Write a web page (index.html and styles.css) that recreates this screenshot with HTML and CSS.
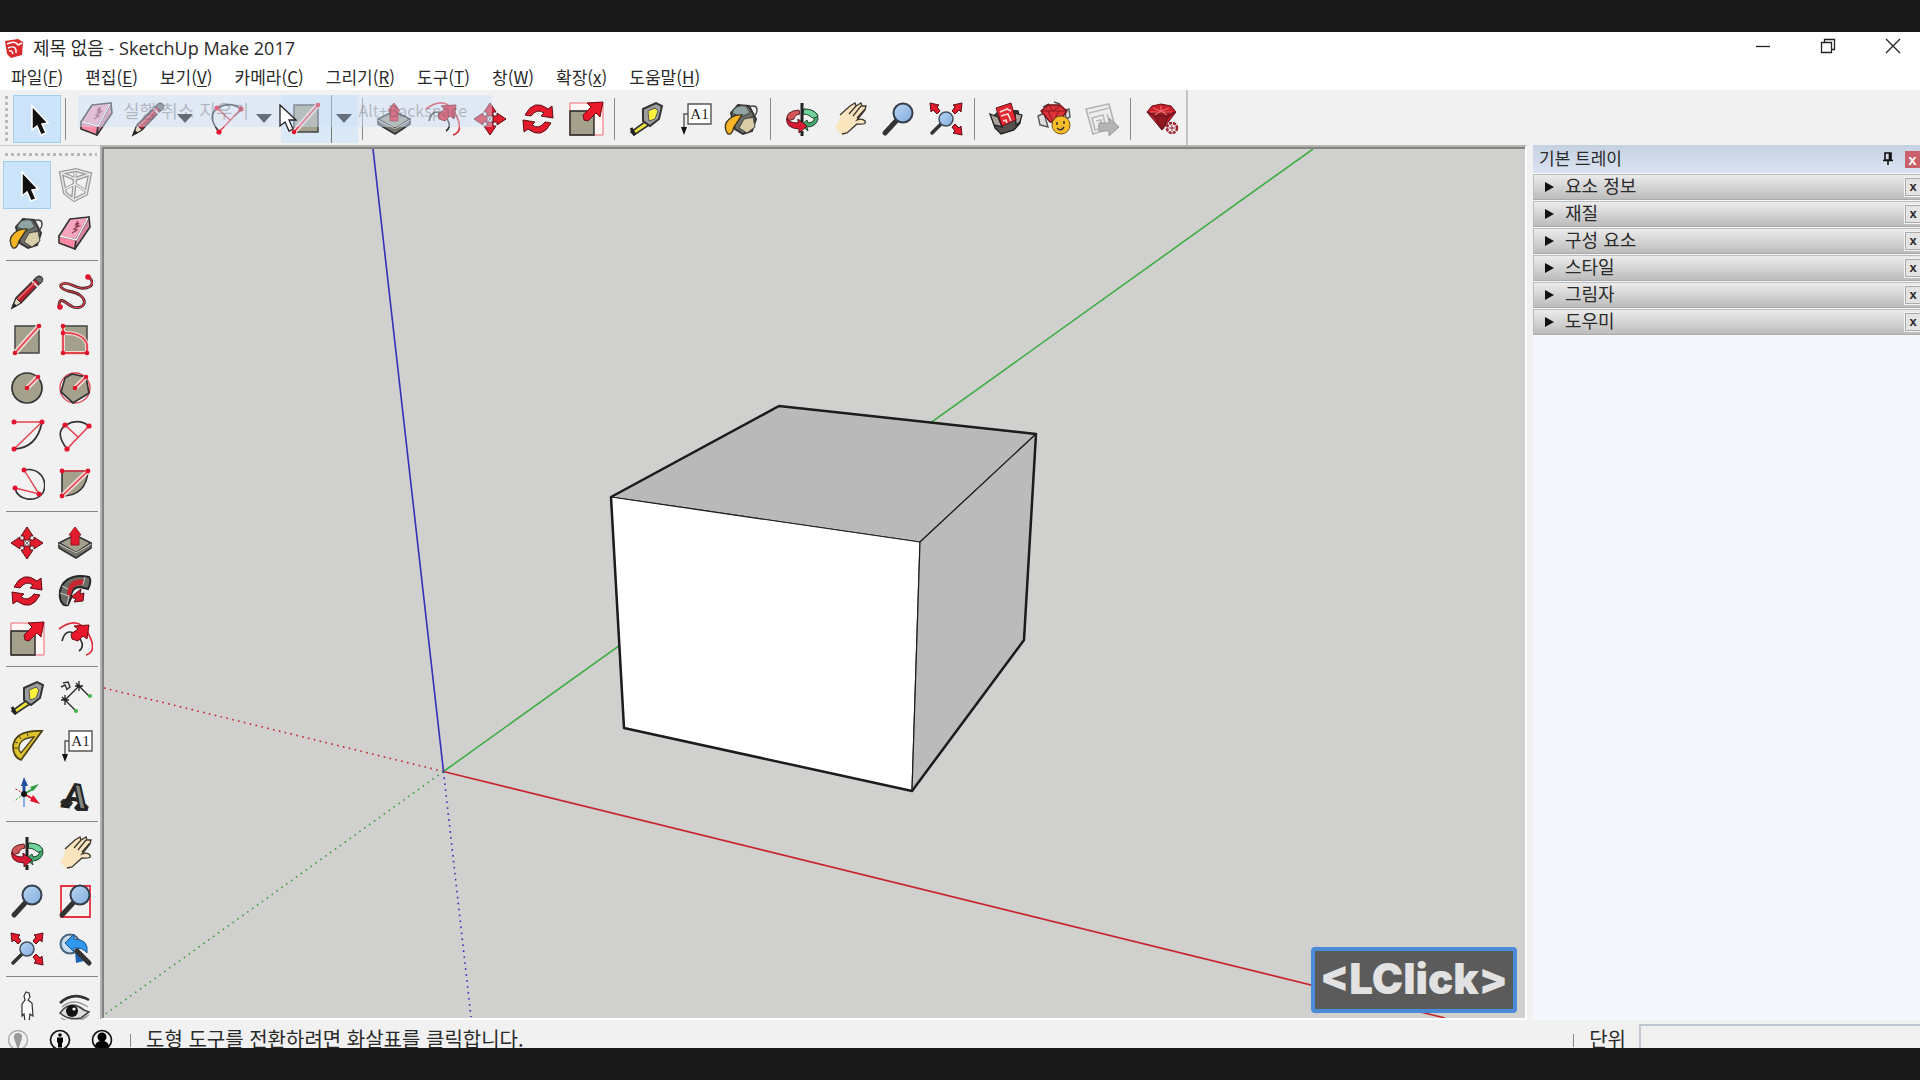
FILE: index.html
```html
<!DOCTYPE html>
<html lang="ko">
<head>
  <meta charset="UTF-8" />
  <meta name="viewport" content="width=device-width, initial-scale=1.0"/>
  <title>제목 없음 - SketchUp Make 2017</title>
  <link rel="stylesheet" href="styles.css">
</head>
<body>

  <svg class="sprite" aria-hidden="true">
    <defs>
      <linearGradient id="lens" x1="0" y1="0" x2="1" y2="1">
        <stop offset="0" stop-color="#b9d6f5"/><stop offset="1" stop-color="#83acdc"/>
      </linearGradient>
    </defs>

    <symbol id="i-select" viewBox="0 0 36 36">
      <path d="M13 5v24l5-4 4 9 5-2-4-9 6-1z" fill="#111" stroke="#fff" stroke-width="1.5"/>
    </symbol>
    <symbol id="i-component" viewBox="0 0 36 36">
      <g fill="none" stroke="#9a9a9a" stroke-width="4"><path d="M4 6l15-3 14 4-4 20-12 6-9-7zM4 6l14 6 15-5M18 12l-2 20"/><path d="M8 22l10-5 11 7M18 5v12" stroke-width="3"/></g>
      <g fill="none" stroke="#e8e8e8" stroke-width="1.5"><path d="M4 6l15-3 14 4-4 20-12 6-9-7zM4 6l14 6 15-5M18 12l-2 20M8 22l10-5 11 7M18 5v12"/></g>
    </symbol>
    <symbol id="i-eraser" viewBox="0 0 36 36">
      <g stroke="#333" stroke-width="1.6" stroke-linejoin="round"><path d="M13 4l19-2-13 23-17-4z" fill="#f5a5bd"/><path d="M2 21l17 4-1 9-16-6z" fill="#ff88a5"/><path d="M32 2l1 10-15 22 1-9z" fill="#d8869f"/></g>
      <path d="M3 21l16 4 12-22" fill="none" stroke="#fff" stroke-width="1.4"/><path d="M21 6l-2 3 3-1-3 3 3 0-5 3 3 1-5 3" fill="none" stroke="#8c3b55" stroke-width="1.3"/>
    </symbol>
    <symbol id="i-pencil" viewBox="0 0 36 36">
      <path d="M3 34l4-10L27 4q3-3 5-1t0 5L12 29z" fill="#bd1e2d" stroke="#333" stroke-width="1.5"/>
      <path d="M3 34l4-10 5 5z" fill="#e5d5bd" stroke="#333"/><path d="M3 34l2-5 3 3z" fill="#222"/><path d="M26 5l5 5 2-2q2-4-1-5t-4 0z" fill="#6c6c6c" stroke="#333"/><path d="M23 7l6 6" stroke="#ddd" stroke-width="2"/><path d="M9 25L26 8" stroke="#f06b72" stroke-width="1.5"/>
    </symbol>
    <symbol id="i-freehand" viewBox="0 0 36 36">
      <path d="M32 3c9 9-3 15-17 8-12-5-16 3-4 6 24 4 18 20 5 16-7-3-14-13-14 0" fill="none" stroke="#3c2023" stroke-width="2.8"/><path d="M32 3c9 9-3 15-17 8-12-5-16 3-4 6 24 4 18 20 5 16-7-3-14-13-14 0" fill="none" stroke="#e4444e" stroke-width="1.2"/>
      <g fill="#e2142d"><circle cx="31" cy="3" r="2.8"/><circle cx="3" cy="33" r="2.8"/></g>
    </symbol>
    <symbol id="i-rect" viewBox="0 0 36 36">
      <path d="M6 4h24v27H6z" fill="#a3a18c" stroke="#444" stroke-width="1.5"/><path d="M6 31L30 4" stroke="#f3d9d6" stroke-width="5"/><path d="M6 31L30 4" stroke="#e4404c" stroke-width="1.8"/>
      <g fill="#e2142d"><circle cx="30" cy="4" r="2.3"/><circle cx="6" cy="31" r="2.3"/></g>
    </symbol>
    <symbol id="i-rotrect" viewBox="0 0 36 36">
      <path d="M6 4h24v27H6z" fill="#a3a18c" stroke="#444" stroke-width="1.5"/><path d="M6 4v27h24v-9Q25 10 6 11" fill="none" stroke="#f3d9d6" stroke-width="4"/><path d="M6 4v27h24v-9Q25 10 6 11" fill="none" stroke="#e4404c" stroke-width="1.8"/>
      <g fill="#e2142d"><circle cx="6" cy="4" r="2.3"/><circle cx="6" cy="11" r="2.3"/><circle cx="6" cy="31" r="2.3"/><circle cx="30" cy="31" r="2.3"/></g>
    </symbol>
    <symbol id="i-circle" viewBox="0 0 36 36">
      <circle cx="18" cy="18" r="15" fill="#a3a18c" stroke="#333" stroke-width="1.7"/><path d="M18 18L29 7" stroke="#f3d9d6" stroke-width="5"/><path d="M18 18L29 7" stroke="#e4404c" stroke-width="1.6"/>
      <g fill="#e2142d"><circle cx="18" cy="18" r="2.3"/><circle cx="29" cy="7" r="2.3"/></g>
    </symbol>
    <symbol id="i-polygon" viewBox="0 0 36 36">
      <circle cx="18" cy="18" r="15" fill="none" stroke="#e4404c" stroke-width="1.3"/><path d="M15 4l14 3 3 16-16 10L4 22l4-14z" fill="#a3a18c" stroke="#333" stroke-width="1.7"/><path d="M18 18L29 7" stroke="#f3d9d6" stroke-width="5"/><path d="M18 18L29 7" stroke="#e4404c" stroke-width="1.6"/>
      <g fill="#e2142d"><circle cx="18" cy="18" r="2.3"/><circle cx="29" cy="7" r="2.3"/></g>
    </symbol>
    <symbol id="i-arc" viewBox="0 0 36 36">
      <path d="M33 4Q28 30 5 31" fill="none" stroke="#333" stroke-width="1.7"/><path d="M5 4h28L5 31" fill="none" stroke="#e4404c" stroke-width="1.4"/>
      <g fill="#e2142d"><circle cx="5" cy="4" r="2.5"/><circle cx="33" cy="4" r="2.5"/><circle cx="5" cy="31" r="2.5"/></g>
    </symbol>
    <symbol id="i-arc2" viewBox="0 0 36 36">
      <path d="M10 31Q-3 14 9 7T32 8" fill="none" stroke="#333" stroke-width="1.7"/><path d="M10 31L32 8M8 7l13 12" fill="none" stroke="#e4404c" stroke-width="1.6"/>
      <g fill="#e2142d"><circle cx="8" cy="7" r="2.6"/><circle cx="32" cy="8" r="2.6"/><circle cx="10" cy="31" r="2.6"/></g>
    </symbol>
    <symbol id="i-arc3" viewBox="0 0 36 36">
      <path d="M15 4C40-1 44 36 18 33Q8 31 6 22" fill="none" stroke="#333" stroke-width="1.7"/><path d="M15 4l15 24-24-6" fill="none" stroke="#e4404c" stroke-width="1.4"/>
      <g fill="#e2142d"><circle cx="15" cy="4" r="2.5"/><circle cx="30" cy="28" r="2.5"/><circle cx="6" cy="22" r="2.5"/></g>
    </symbol>
    <symbol id="i-pie" viewBox="0 0 36 36">
      <path d="M5 5v25Q29 30 31 5z" fill="#a3a18c" stroke="#333" stroke-width="1.6"/><path d="M5 30L31 5" stroke="#f3d9d6" stroke-width="5"/><path d="M5 30L31 5H5" fill="none" stroke="#e4404c" stroke-width="1.6"/>
      <g fill="#e2142d"><circle cx="5" cy="5" r="2.4"/><circle cx="31" cy="5" r="2.4"/><circle cx="5" cy="30" r="2.4"/></g>
    </symbol>
    <symbol id="i-move" viewBox="0 0 36 36">
      <g fill="#e31b2d" stroke="#5a1015" stroke-width="1"><path id="mv" d="M18 2l6 9h-3v4h-6v-4h-3z"/><use href="#mv" transform="rotate(90 18 18)"/><use href="#mv" transform="rotate(180 18 18)"/><use href="#mv" transform="rotate(270 18 18)"/></g>
      <path d="M15 15l6 6M21 15l-6 6" stroke="#777" stroke-width="1"/>
    </symbol>
    <symbol id="i-push" viewBox="0 0 36 36">
      <g stroke="#333" stroke-width="1.6" stroke-linejoin="round"><path d="M2 18l16-8 16 8-15 10z" fill="#a3a18c"/><path d="M2 18v5l17 10 15-10v-5L19 28z" fill="#77776c"/></g>
      <path d="M2 19l17 9 15-9" fill="none" stroke="#ddd"/><path d="M18 2l6 8h-2v10h-8V10h-2z" fill="#e31b2d" stroke="#9a1420"/>
    </symbol>
    <symbol id="i-rotate" viewBox="0 0 36 36">
      <g fill="#e31b2d" stroke="#5a1015"><path id="rt" d="M5 14Q14-3 28 8l4-3 1 12-12-2 3-3Q17 7 11 15z"/><use href="#rt" transform="rotate(180 18 18)"/></g>
    </symbol>
    <symbol id="i-follow" viewBox="0 0 36 36">
      <path d="M3 25C1 8 15 0 32 4q3 4-1 12l-8-2Q14 14 14 25l-3 7Q5 34 3 25z" fill="#6b6c64" stroke="#252525" stroke-width="2"/><path d="M10 23C10 9 18 5 27 7l-1 5c-8-1-11 3-12 10z" fill="#c92632"/><path d="M14 24l10-8-1 5 4-1-1 8-9 1 2-3z" fill="#d81c2b" stroke="#55161b"/><path d="M3 20l9 3-2 9M5 13l6 3M28 4l-2 8" fill="none" stroke="#ccc"/>
    </symbol>
    <symbol id="i-scale" viewBox="0 0 36 36">
      <path d="M2 2h33v32H2z" fill="#fff6f6" stroke="#ef6872"/><path d="M2 10h24v24H2z" fill="#a3a18c" stroke="#222" stroke-width="1.4"/><path d="M35 1l-3 15-4-4-8 8-4-1-1-5 8-8-4-4z" fill="#e8172a" stroke="#6b1016"/>
    </symbol>
    <symbol id="i-offset" viewBox="0 0 36 36">
      <path d="M2 8Q21-6 31 12t-2 22" fill="none" stroke="#e02c39" stroke-width="1.7"/><path d="M5 20Q9 5 21 15q8 10 1 15" fill="none" stroke="#333" stroke-width="1.7"/><path d="M32 4l-2 14-4-3-5 5-6-2-1-5 7-5-4-3z" fill="#e8172a" stroke="#6b1016"/>
    </symbol>
    <symbol id="i-tape" viewBox="0 0 36 36">
      <path d="M3 31l15-11 3 4L6 34z" fill="#ece43a" stroke="#333" stroke-width="1.6"/><path d="M3 27l4 7" stroke="#222" stroke-width="3"/><path d="M15 8l13-6 6 3-3 13-9 7-7-5z" fill="#9d9da0" stroke="#333" stroke-width="2"/><path d="M20 10l7-3 3 3-3 8-6 2z" fill="#fff23c" stroke="#555"/>
    </symbol>
    <symbol id="i-dim" viewBox="0 0 36 36">
      <path d="M8 20L22 6M8 20l10 10M22 6l10 10M4 20h8M8 15v10M5 17l6 6M18 6h8M22 1v10M19 3l6 6" fill="none" stroke="#222" stroke-width="1.3"/><g fill="#43b44b"><circle cx="19" cy="31" r="2"/><circle cx="33" cy="16" r="2"/></g><path d="M6 3l5-1 2 5-4 3M4 7l4-2 2 4" fill="none" stroke="#333" stroke-width="1.5"/>
    </symbol>
    <symbol id="i-protractor" viewBox="0 0 36 36">
      <path d="M33 3Q6 2 4 18q0 11 8 14z" fill="#dfc32e" stroke="#4a4215" stroke-width="1.8"/><path d="M25 9Q9 10 10 22l2 3z" fill="#f1f1f1" stroke="#4a4215" stroke-width="1.3"/><path d="M10 8l2 3M6 14l3 1M5 20h4M18 5l1 3" stroke="#4a4215"/>
    </symbol>
    <symbol id="i-label" viewBox="0 0 36 36">
      <path d="M12 3h23v20H12z" fill="#fff" stroke="#555" stroke-width="1.4"/><text x="23.5" y="18" text-anchor="middle" font-family="Liberation Serif, serif" font-size="15" fill="#222">A1</text><path d="M12 13H8v14" fill="none" stroke="#555" stroke-width="1.4"/><path d="M5 26h6l-3 8z" fill="#111"/>
    </symbol>
    <symbol id="i-paint" viewBox="0 0 36 36">
      <path d="M7 12L14 4l11 1 7 13-4 12-9 3-8-5z" fill="#6e6e68" stroke="#333" stroke-width="2"/><path d="M8 12q3-9 14-7l4 7-9 4z" fill="#8fa3a2" stroke="#444"/><path d="M20 18l9-2 2 10-8 6-8-5z" fill="#d9cda7" stroke="#444"/><path d="M2 22q6-9 16-8-4 6-8 12-2 8-6 7-4-4-2-11z" fill="#f9b524" stroke="#3d3929" stroke-width="1.4"/><path d="M24 6q9-3 9 3t-7 8" fill="none" stroke="#444" stroke-width="1.4"/>
    </symbol>
    <symbol id="i-axes" viewBox="0 0 36 36">
      <path d="M15 18V8" stroke="#264e9e" stroke-width="3"/><path d="M12 10l3-9 4 9z" fill="#264e9e"/><path d="M15 18l9-5" stroke="#2c9c3c" stroke-width="2"/><path d="M21 11l9-3-6 7z" fill="#2c9c3c"/><path d="M15 18l9 5" stroke="#e2142d" stroke-width="2"/><path d="M24 19l7 9-10-3z" fill="#e2142d"/><path d="M15 18l-10-6" stroke="#e2142d" stroke-dasharray="2 2"/><path d="M15 18L5 25" stroke="#2c9c3c" stroke-dasharray="2 2"/><path d="M15 18v13" stroke="#8db0ec" stroke-width="2"/><circle cx="15" cy="18" r="3" fill="#111"/>
    </symbol>
    <symbol id="i-text3d" viewBox="0 0 36 36">
      <path d="M3 26l3-3h7l3 4-2 3H6zM17 32l3-4h9l3 3-3 4h-9z" fill="#2d2d2b"/>
      <text x="19" y="32" font-family="Liberation Serif, serif" font-weight="bold" font-size="36" text-anchor="middle" fill="#85867d" stroke="#222" stroke-width="2" transform="rotate(8 18 18)">A</text>
    </symbol>
    <symbol id="i-orbit" viewBox="0 0 36 36">
      <path d="M20 8q15 1 14 10-2 8-11 8l1 4-7-6 6-5 1 3q7-1 6-5-2-4-10-4z" fill="#44a86b" stroke="#244b36"/><path d="M20 8q11 0 14 7-5 4-8 0-3-2-7-2z" fill="#71d39b" stroke="#244b36"/><path d="M15 9Q1 10 3 20l7-2q0-4 6-5z" fill="#d25756" stroke="#5b2025"/><path d="M3 17q2 5 11 5v-4l9 7-8 7v-4Q1 27 3 17z" fill="#d91a34" stroke="#5b1020"/><path d="M18 2v19M18 30v5" stroke="#222" stroke-width="3"/>
    </symbol>
    <symbol id="i-pan" viewBox="0 0 36 36">
      <path d="M3 26Q8 22 8 14l10-9 5-2 2 1 4-2 2 3 3 0 0 3-9 10 7 0q3 2 1 4h-7L15 32q-4 3-7 1z" fill="#fae5bf"/><path d="M8 14l10-9 5-3 1 3 5-3 1 3 4 0-1 4-8 10q5-2 8 1 2 4-8 3L15 32l-5 1M24 5l-7 8M29 5l-8 10M33 8l-8 9" fill="none" stroke="#3c372e" stroke-width="1.3"/>
    </symbol>
    <symbol id="i-zoom" viewBox="0 0 36 36">
      <path d="M17 19L5 32" stroke="#333" stroke-width="5" stroke-linecap="round"/><circle cx="23" cy="12" r="9.5" fill="url(#lens)" stroke="#333e4d" stroke-width="2"/>
    </symbol>
    <symbol id="i-zoomwin" viewBox="0 0 36 36">
      <path d="M4 3h29v31H4z" fill="none" stroke="#e83142" stroke-width="1.8"/><use href="#i-zoom" width="36" height="36"/>
    </symbol>
    <symbol id="i-extents" viewBox="0 0 36 36">
      <path d="M16 20L4 32" stroke="#333" stroke-width="3.5" stroke-linecap="round"/><g fill="#e31b2d" stroke="#5a1015"><path d="M2 2l9 2-2 2 3 4-3 3-4-4-2 2z"/><path d="M34 2l-9 2 2 2-3 4 3 3 4-4 2 2z"/><path d="M34 34l-9-2 2-2-3-4 3-3 4 4 2-2z"/></g><circle cx="18" cy="18" r="7" fill="url(#lens)" stroke="#414d5d" stroke-width="1.5"/>
    </symbol>
    <symbol id="i-previous" viewBox="0 0 36 36">
      <circle cx="13" cy="13" r="9.5" fill="#c6dcf1" stroke="#4b647d" stroke-width="2"/><path d="M18 20l1 12 8-2z" fill="#1b61b4"/><path d="M20 20l12 12" stroke="#333" stroke-width="5" stroke-linecap="round"/><path d="M8 12l9-9v5q15 0 13 14-5-6-13-5v4z" fill="#2f98ec" stroke="#1d548c"/>
    </symbol>
    <symbol id="i-camera" viewBox="0 0 36 36">
      <path d="M16 10l-1-4 2-4 3 1 1 4-2 3 4 3 1 13-3-2-1 7h-4l-1-7-2 2 0-12z" fill="#fff" stroke="#333" stroke-width="1.2"/><path d="M13 32h4M19 32h4" stroke="#e2142d" stroke-width="2"/>
    </symbol>
    <symbol id="i-eye" viewBox="0 0 36 36">
      <path d="M3 13Q16 1 32 10" fill="none" stroke="#333" stroke-width="2.5"/><path d="M3 23q10-14 24-3l5 2-8 6q-12 3-21-5z" fill="#ddd" stroke="#444" stroke-width="1.6"/><circle cx="15" cy="21" r="6" fill="#111"/><circle cx="17" cy="19" r="1.6" fill="#fff"/><path d="M4 28q12 7 26-1M5 17Q16 7 31 17M23 30l9-5" fill="none" stroke="#999" stroke-width="1.3"/>
    </symbol>
    <symbol id="i-warehouse" viewBox="0 0 36 36">
      <path d="M4 17l8-8 18 1 2 12-6 7-13 4-6-6z" fill="#55504d" stroke="#222" stroke-width="1.4"/><path d="M2 13l8 3 4 10-8-2zM34 14l-7-2 1 12 4-3z" fill="#aaa199" stroke="#222" stroke-width="1.3"/><path d="M8 7l15-5 5 17-14 6z" fill="#e3262f" stroke="#631319"/><path d="M12 11l7-3 4 2M13 15l7-2 3 7M15 20l3-1 1 3" fill="none" stroke="#ffdada" stroke-width="1.7"/>
    </symbol>
    <symbol id="i-share" viewBox="0 0 36 36">
      <path d="M2 15l6-3 4 14-8-2zM29 9l4-1 1 8-4 2zM7 6l6-3M18 1l6 2" fill="#ddd" stroke="#555" stroke-width="1.4"/><path d="M5 10l7-6h12l7 6-8 11h-9z" fill="#dc3138" stroke="#651319" stroke-width="1.3"/><path d="M5 10h26M12 10l5 11 6-11M13 4l4 6 7-5" fill="none" stroke="#8c161d"/><circle cx="25" cy="24" r="9" fill="#f7bd28" stroke="#735515"/><path d="M21 21v3M28 20v3M21 27q4 4 7-1" fill="none" stroke="#333" stroke-width="1.5"/>
    </symbol>
    <symbol id="i-send" viewBox="0 0 36 36">
      <path d="M2 8l23-5 6 23-22 7z" fill="#eee" stroke="#b3b3b3" stroke-width="1.6"/><path d="M5 12l20-5M8 17l11-3 3 12-11 3zM12 20l5-1 1 5-4 1M23 13l4 12" fill="none" stroke="#bbb" stroke-width="1.7"/><path d="M15 22h10v-5l10 9-10 9v-5H15z" fill="#b4b4b4" stroke="#999"/>
    </symbol>
    <symbol id="i-ruby" viewBox="0 0 36 36">
      <path d="M3 11l5-6 9-2 10 2 5 6-14 18z" fill="#c71e2a" stroke="#5f1118"/><path d="M3 11l7 4h15l7-4M10 15l8 14 7-14" fill="#8f1720" stroke="#5f1118"/><path d="M9 7l8 3 8-3M6 11h22M17 5v5l-6 4M17 10l6 4" fill="none" stroke="#f16469" stroke-width="1.2"/><circle cx="28" cy="27" r="5" fill="#eee" stroke="#9c1f2b" stroke-width="2.5" stroke-dasharray="3 1"/><path d="M28 24v6M25 27h6" stroke="#9c1f2b"/>
    </symbol>
  </svg>

  <div class="app">
    <header class="titlebar">
      <svg class="logo" viewBox="0 0 20 20"><path d="M1 3l13-2 5 3-1 13-11 3-4-4z" fill="#d92b2c"/><path d="M3 6q8-4 11 1M4 10q7-3 8 2v3M5 13q3-1 4 3M14 7l4-2" fill="none" stroke="#fff" stroke-width="1.5"/></svg>
      <h1 class="title">제목 없음 - SketchUp Make 2017</h1>
      <div class="window-buttons">
        <button aria-label="최소화"><svg viewBox="0 0 16 16"><path d="M1 8.5h14"/></svg></button>
        <button aria-label="이전 크기로"><svg viewBox="0 0 16 16"><path d="M1.5 4.5h10v10h-10zM4.500 4.500v-3h10v10h-3"/></svg></button>
        <button aria-label="닫기"><svg viewBox="0 0 16 16"><path d="M1 1l14 14M15 1L1 15"/></svg></button>
      </div>
    </header>

    <nav class="menubar">
      <button>파일(<u>F</u>)</button>
      <button>편집(<u>E</u>)</button>
      <button>보기(<u>V</u>)</button>
      <button>카메라(<u>C</u>)</button>
      <button>그리기(<u>R</u>)</button>
      <button>도구(<u>T</u>)</button>
      <button>창(<u>W</u>)</button>
      <button>확장(<u>x</u>)</button>
      <button>도움말(<u>H</u>)</button>
    </nav>

    <div class="toolbar-row">
      <div class="toolbar">
        <span class="grip"></span>
        <button class="tool active" aria-label="선택"><svg><use href="#i-select"/></svg></button>
        <span class="sep"></span>
        <button class="tool" aria-label="지우개"><svg><use href="#i-eraser"/></svg></button>
        <div class="split">
          <button class="tool" aria-label="선"><svg><use href="#i-pencil"/></svg></button>
          <button class="drop" aria-label="선 도구 목록"></button>
        </div>
        <div class="split">
          <button class="tool" aria-label="호"><svg><use href="#i-arc2"/></svg></button>
          <button class="drop" aria-label="호 도구 목록"></button>
        </div>
        <div class="split hover">
          <button class="tool" aria-label="직사각형"><svg><use href="#i-rect"/></svg></button>
          <button class="drop" aria-label="도형 도구 목록"></button>
        </div>
        <span class="sep"></span>
        <button class="tool" aria-label="밀기/끌기"><svg><use href="#i-push"/></svg></button>
        <button class="tool" aria-label="오프셋"><svg><use href="#i-offset"/></svg></button>
        <button class="tool" aria-label="이동"><svg><use href="#i-move"/></svg></button>
        <button class="tool" aria-label="회전"><svg><use href="#i-rotate"/></svg></button>
        <button class="tool" aria-label="배율"><svg><use href="#i-scale"/></svg></button>
        <span class="sep"></span>
        <button class="tool" aria-label="줄자"><svg><use href="#i-tape"/></svg></button>
        <button class="tool" aria-label="텍스트"><svg><use href="#i-label"/></svg></button>
        <button class="tool" aria-label="페인트통"><svg><use href="#i-paint"/></svg></button>
        <span class="sep"></span>
        <button class="tool" aria-label="궤도"><svg><use href="#i-orbit"/></svg></button>
        <button class="tool" aria-label="이동 보기"><svg><use href="#i-pan"/></svg></button>
        <button class="tool" aria-label="확대/축소"><svg><use href="#i-zoom"/></svg></button>
        <button class="tool" aria-label="범위 확대"><svg><use href="#i-extents"/></svg></button>
        <span class="sep"></span>
        <button class="tool" aria-label="3D Warehouse"><svg><use href="#i-warehouse"/></svg></button>
        <button class="tool" aria-label="모델 공유"><svg><use href="#i-share"/></svg></button>
        <button class="tool" aria-label="LayOut으로 보내기" disabled><svg><use href="#i-send"/></svg></button>
        <span class="sep"></span>
        <button class="tool" aria-label="Extension Warehouse"><svg><use href="#i-ruby"/></svg></button>

        <!-- fading menu item -->
        <div class="menu-ghost"><span>실행 취소 지우기</span><span class="shortcut">Alt+Backspace</span></div>
        <svg class="pointer" viewBox="0 0 18 28"><path d="M1 1v21l5-4 4 9 4-2-4-9h7z" fill="#fff" stroke="#222" stroke-width="1.3"/></svg>
      </div>
    </div>

    <main class="workspace">
      <aside class="palette">
        <span class="grip"></span>
        <div class="group">
          <button class="tool active" aria-label="선택"><svg><use href="#i-select"/></svg></button>
          <button class="tool" aria-label="구성 요소 만들기"><svg><use href="#i-component"/></svg></button>
          <button class="tool" aria-label="페인트통"><svg><use href="#i-paint"/></svg></button>
          <button class="tool" aria-label="지우개"><svg><use href="#i-eraser"/></svg></button>
        </div>
        <div class="group">
          <button class="tool" aria-label="선"><svg><use href="#i-pencil"/></svg></button>
          <button class="tool" aria-label="자유형"><svg><use href="#i-freehand"/></svg></button>
          <button class="tool" aria-label="직사각형"><svg><use href="#i-rect"/></svg></button>
          <button class="tool" aria-label="회전된 직사각형"><svg><use href="#i-rotrect"/></svg></button>
          <button class="tool" aria-label="원"><svg><use href="#i-circle"/></svg></button>
          <button class="tool" aria-label="다각형"><svg><use href="#i-polygon"/></svg></button>
          <button class="tool" aria-label="호"><svg><use href="#i-arc"/></svg></button>
          <button class="tool" aria-label="2점 호"><svg><use href="#i-arc2"/></svg></button>
          <button class="tool" aria-label="3점 호"><svg><use href="#i-arc3"/></svg></button>
          <button class="tool" aria-label="파이"><svg><use href="#i-pie"/></svg></button>
        </div>
        <div class="group">
          <button class="tool" aria-label="이동"><svg><use href="#i-move"/></svg></button>
          <button class="tool" aria-label="밀기/끌기"><svg><use href="#i-push"/></svg></button>
          <button class="tool" aria-label="회전"><svg><use href="#i-rotate"/></svg></button>
          <button class="tool" aria-label="따라가기"><svg><use href="#i-follow"/></svg></button>
          <button class="tool" aria-label="배율"><svg><use href="#i-scale"/></svg></button>
          <button class="tool" aria-label="오프셋"><svg><use href="#i-offset"/></svg></button>
        </div>
        <div class="group">
          <button class="tool" aria-label="줄자"><svg><use href="#i-tape"/></svg></button>
          <button class="tool" aria-label="치수"><svg><use href="#i-dim"/></svg></button>
          <button class="tool" aria-label="각도기"><svg><use href="#i-protractor"/></svg></button>
          <button class="tool" aria-label="텍스트"><svg><use href="#i-label"/></svg></button>
          <button class="tool" aria-label="축"><svg><use href="#i-axes"/></svg></button>
          <button class="tool" aria-label="3D 텍스트"><svg><use href="#i-text3d"/></svg></button>
        </div>
        <div class="group">
          <button class="tool" aria-label="궤도"><svg><use href="#i-orbit"/></svg></button>
          <button class="tool" aria-label="이동 보기"><svg><use href="#i-pan"/></svg></button>
          <button class="tool" aria-label="확대/축소"><svg><use href="#i-zoom"/></svg></button>
          <button class="tool" aria-label="창 확대"><svg><use href="#i-zoomwin"/></svg></button>
          <button class="tool" aria-label="범위 확대"><svg><use href="#i-extents"/></svg></button>
          <button class="tool" aria-label="이전"><svg><use href="#i-previous"/></svg></button>
        </div>
        <div class="group">
          <button class="tool" aria-label="카메라 배치"><svg><use href="#i-camera"/></svg></button>
          <button class="tool" aria-label="둘러보기"><svg><use href="#i-eye"/></svg></button>
        </div>
      </aside>

      <section class="viewport">
        <svg class="scene" viewBox="104 149 1421 870" preserveAspectRatio="xMinYMin slice">
          <g fill="none" stroke-width="1.6">
            <path d="M443.5 771.5L1445 1018" stroke="#c8242e"/>
            <path d="M443.5 771.5L1313 149" stroke="#3eae42"/>
            <path d="M443.5 771.5L373 149" stroke="#3530b8"/>
            <g stroke-dasharray="1.6 4.4">
              <path d="M443.5 771.5L104 688" stroke="#c8242e"/>
              <path d="M443.5 771.5L104 1015" stroke="#3e9c42"/>
              <path d="M443.5 771.5L471 1017" stroke="#3530b8"/>
            </g>
          </g>
          <g stroke="#1c1c1c" stroke-width="1.2" stroke-linejoin="round">
            <path d="M779 406L1036 434 920 542 611 497z" fill="#b9b9b9"/>
            <path d="M611 497L920 542 912 791 624 728z" fill="#fff"/>
            <path d="M920 542L1036 434 1024 640 912 791z" fill="#bbb"/>
            <path d="M779 406L1036 434 1024 640 912 791 624 728 611 497z" fill="none" stroke-width="2.5"/>
          </g>
        </svg>
        <div class="key-hint">&lt;LClick&gt;</div>
      </section>

      <aside class="tray">
        <div class="tray-head">
          <h2>기본 트레이</h2>
          <button class="pin" aria-label="고정"><svg viewBox="0 0 10 14"><path d="M2 1h6v7H2zM6.500 1v7M0 8.500h10M5 8v5"/></svg></button>
          <button class="tray-close" aria-label="닫기">x</button>
        </div>
        <div class="tray-row"><button class="open">요소 정보</button><button class="x" aria-label="요소 정보 닫기">x</button></div>
        <div class="tray-row"><button class="open">재질</button><button class="x" aria-label="재질 닫기">x</button></div>
        <div class="tray-row"><button class="open">구성 요소</button><button class="x" aria-label="구성 요소 닫기">x</button></div>
        <div class="tray-row"><button class="open">스타일</button><button class="x" aria-label="스타일 닫기">x</button></div>
        <div class="tray-row"><button class="open">그림자</button><button class="x" aria-label="그림자 닫기">x</button></div>
        <div class="tray-row"><button class="open">도우미</button><button class="x" aria-label="도우미 닫기">x</button></div>
      </aside>
    </main>

    <footer class="statusbar">
      <div class="status-icons">
        <svg viewBox="0 0 22 22"><circle cx="11" cy="11" r="9.5" fill="none" stroke="#aaa" stroke-width="1.4"/><path d="M11 18l-2-6q-3-7 2-7t2 7z" fill="#999" stroke="#999" stroke-width="2"/></svg>
        <svg viewBox="0 0 22 22"><circle cx="11" cy="11" r="9.5" fill="none" stroke="#111" stroke-width="1.7"/><circle cx="11" cy="6" r="1.8"/><path d="M8 8.500h6v5h-1v5H9v-5H8z"/></svg>
        <svg viewBox="0 0 22 22"><circle cx="11" cy="11" r="9.5" fill="none" stroke="#111" stroke-width="1.7"/><circle cx="11" cy="8" r="4.5"/><path d="M4 17q1-5 7-5t7 5l-4 3H8z"/></svg>
      </div>
      <span class="bar"></span>
      <p>도형 도구를 전환하려면 화살표를 클릭합니다.</p>
      <span class="bar"></span>
      <label for="measure">단위</label>
      <input id="measure" type="text">
    </footer>
  </div>

</body>
</html>
```

FILE: styles.css
```css
* {
  box-sizing: border-box;
}

body {
  margin: 0;
  padding: 32px 0;
  height: 100vh;
  overflow: hidden;
  background-color: #181818;
  color: #2a2a2a;
  font-family: "Noto Sans CJK KR", sans-serif;
  font-size: 18px;
}

button {
  margin: 0;
  padding: 0;
  border: none;
  background: none;
  color: inherit;
  font: inherit;
}

h1, h2, p {
  margin: 0;
  font-size: 18px;
  font-weight: normal;
}

.sprite {
  position: absolute;
  width: 0;
  height: 0;
}

.app {
  display: flex;
  flex-direction: column;
  height: 100%;
  background: #f1f1f1;
  overflow: hidden;
}

/* title + menu */
.titlebar {
  display: flex;
  align-items: center;
  height: 32px;
  flex: none;
  padding-left: 4px;
  background: #fff;
}

.logo {
  width: 20px;
  height: 20px;
  margin-right: 9px;
}

.title {
  font-family: "Open Sans", "Noto Sans CJK KR", sans-serif;
  font-size: 18px;
  line-height: 32px;
}

.window-buttons {
  display: flex;
  gap: 11px;
  margin-left: auto;
}

.window-buttons button {
  display: flex;
  align-items: center;
  justify-content: center;
  width: 54px;
  height: 32px;
  padding-bottom: 4px;
}

.window-buttons svg {
  width: 16px;
  height: 16px;
  fill: none;
  stroke: #222;
  stroke-width: 1.3;
}

.menubar {
  display: flex;
  gap: 22px;
  flex: none;
  height: 26px;
  padding-left: 11px;
  background: #fff;
  font-size: 17px;
}

.menubar button {
  line-height: 26px;
}

.menubar u {
  text-underline-offset: 2px;
}

/* toolbar */
.toolbar-row {
  display: flex;
  flex: none;
  height: 55px;
}

.toolbar {
  position: relative;
  display: flex;
  align-items: center;
  padding: 2px 0 0 5px;
  border-right: 2px solid #c4c4c4;
}

.toolbar .grip {
  width: 3px;
  height: 46px;
  margin-right: 5px;
  background: repeating-linear-gradient(#b9b9b9 0 3px, transparent 3px 6px);
}

.tool {
  display: flex;
  align-items: center;
  justify-content: center;
  width: 48px;
  height: 48px;
}

.tool svg {
  width: 36px;
  height: 36px;
}

.tool.active {
  background: #cce4f9;
  border: 1px solid #a3cdf1;
}

.toolbar .sep {
  width: 1px;
  height: 42px;
  margin: 0 7px 0 4px;
  background: #888;
}

.split {
  display: flex;
  margin-left: 2px;
}

.split .tool {
  width: 50px;
}

.drop {
  display: flex;
  align-items: center;
  justify-content: center;
  width: 27px;
  padding-right: 3px;
}

.drop::before {
  content: "";
  border: 8px solid transparent;
  border-top: 9px solid #111;
  border-bottom: 0;
}

.split.hover {
  background: #dbe9f7;
}

.split.hover .drop {
  border-left: 1px solid #777;
}

.menu-ghost {
  position: absolute;
  left: 78px;
  top: 5px;
  display: flex;
  justify-content: space-between;
  width: 414px;
  height: 32px;
  padding: 0 25px 0 45px;
  background: rgba(205, 224, 248, 0.45);
  color: rgba(90, 90, 100, 0.35);
  line-height: 30px;
}

.shortcut {
  font-size: 16px;
}

.pointer {
  position: absolute;
  left: 279px;
  top: 14px;
  width: 18px;
  height: 28px;
}

/* workspace */
.workspace {
  display: flex;
  flex: 1;
  min-height: 0;
}

.palette {
  flex: none;
  width: 100px;
  padding: 7px 1px 0 3px;
  border-top: 1px solid #ccc;
  overflow: hidden;
}

.palette .grip {
  display: block;
  height: 3px;
  margin: 0 2px 5px 2px;
  background: repeating-linear-gradient(90deg, #b9b9b9 0 3px, transparent 3px 6px);
}

.group {
  display: grid;
  grid-template-columns: 48px 48px;
}

.group + .group::before {
  content: "";
  grid-column: 1 / -1;
  height: 1px;
  margin: 3px 1px 7px 3px;
  background: #888;
}

.viewport {
  position: relative;
  flex: 1;
  min-width: 0;
  border: 2px solid #fff;
  border-top-color: #b4b4b2;
  border-left-color: #b4b4b2;
}

.scene {
  display: block;
  width: 100%;
  height: 100%;
  border-top: 2px solid #83837f;
  border-left: 2px solid #83837f;
  background: #d0d0ce;
}

.key-hint {
  position: absolute;
  right: 8px;
  bottom: 5px;
  width: 206px;
  height: 66px;
  border: 4px solid #4a8cd8;
  border-radius: 4px;
  background: #5b5b5b;
  color: #e2e2e2;
  font-family: Inter, sans-serif;
  font-size: 42px;
  font-weight: 900;
  line-height: 56px;
  text-align: center;
}

/* tray */
.tray {
  flex: none;
  width: 387px;
  margin-left: 6px;
  background: #f4f7fc;
}

.tray-head {
  display: flex;
  align-items: center;
  height: 28px;
  padding-left: 6px;
  background: linear-gradient(#c5d0e0, #dae4f3);
}

.tray-head h2 {
  flex: 1;
  padding-bottom: 2px;
  font-size: 17px;
  line-height: 24px;
}

.pin {
  width: 10px;
  height: 14px;
  margin-right: 12px;
}

.pin svg {
  display: block;
  fill: none;
  stroke: #111;
  stroke-width: 1.6;
}

.tray-close {
  width: 15px;
  height: 17px;
  background: #c9606a;
  color: #fff;
  font: bold 15px/15px "Liberation Sans", sans-serif;
}

.tray-row {
  display: flex;
  align-items: center;
  height: 26px;
  margin-top: 1px;
  border: 1px solid #bbb;
  border-right: none;
  border-bottom-color: #aaa;
  background: linear-gradient(#ececec, #bcbcbc);
}

.open {
  display: flex;
  align-items: center;
  flex: 1;
  padding-bottom: 4px;
  line-height: 20px;
}

.open::before {
  content: "";
  margin: 4px 11px 0 11px;
  border: 5px solid transparent;
  border-left: 9px solid #111;
  border-right: 0;
}

.tray-row .x {
  width: 15px;
  height: 18px;
  border: 1px solid #aaa;
  border-right: none;
  outline: 1px solid #f3f3f3;
  background: #e4e4e4;
  font: bold 13px/16px "Liberation Sans", sans-serif;
}

/* status */
.statusbar {
  display: flex;
  align-items: flex-start;
  flex: none;
  height: 28px;
  padding: 4px 0 0 7px;
  font-size: 20px;
  line-height: 30px;
  overflow: hidden;
}

.status-icons {
  display: flex;
  gap: 20px;
  padding-top: 5px;
}

.status-icons svg {
  width: 22px;
  height: 22px;
}

.bar {
  width: 1px;
  height: 13px;
  margin: 10px 15px 0 17px;
  background: #888;
}

.statusbar p {
  flex: 1;
  font-size: 20px;
  line-height: 30px;
}

.statusbar input {
  width: 281px;
  height: 30px;
  margin-left: 13px;
  border: 2px solid #c0c6d2;
  border-right: none;
  background: #f0f0f0;
}
```
